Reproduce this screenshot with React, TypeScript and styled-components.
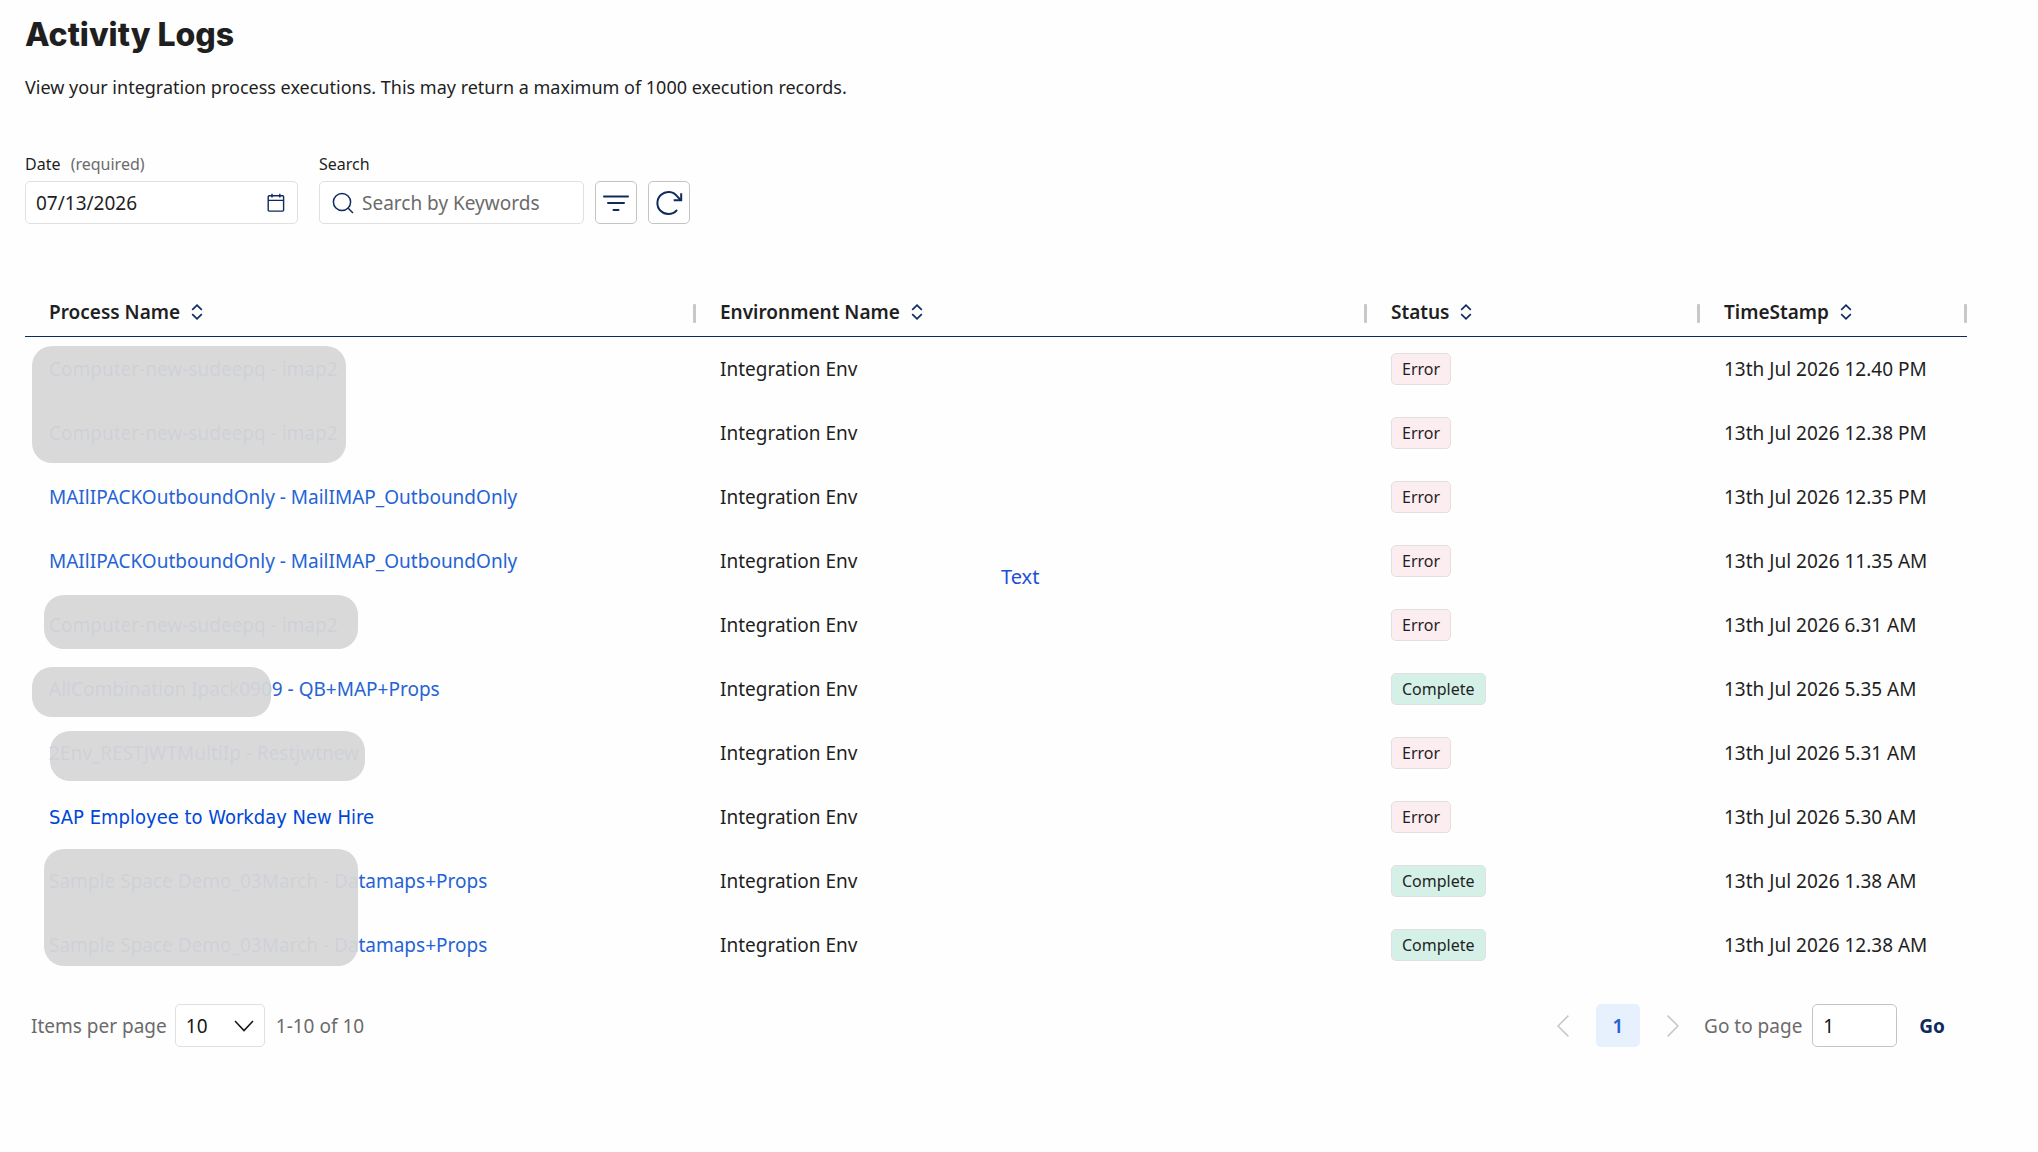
import { useState } from "react";
import styled, { createGlobalStyle } from "styled-components";

const Colors = {
  text: "#1f1f1f",
  muted: "#6b6b6b",
  navy: "#0f2a5c",
  link: "#2563d4",
  border: "#e0e0e0",
  borderStrong: "#c4c4c4",
};

const GlobalStyle = createGlobalStyle`
  * {
    box-sizing: border-box;
  }

  body {
    margin: 0;
    background: #fefefe;
    color: ${Colors.text};
    font-family: "Noto Sans", "Open Sans", sans-serif;
    font-size: 19px;
    line-height: 26px;
  }

  button,
  input,
  select {
    font: inherit;
    color: inherit;
    margin: 0;
  }

  svg {
    display: block;
    flex: none;
  }
`;

const Page = styled.main`
  padding: 16px 71px 0 25px;
`;

const Title = styled.h1`
  margin: 0;
  font-family: Inter, sans-serif;
  font-size: 32px;
  font-weight: 800;
  line-height: 38px;
`;

const Subtitle = styled.p`
  margin: 20px 0 0;
  font-size: 18px;
`;

const Toolbar = styled.div`
  display: flex;
  align-items: flex-end;
  margin-top: 53px;
`;

const Field = styled.div<{ $width: number }>`
  display: flex;
  flex-direction: column;
  gap: 6px;
  width: ${(p) => p.$width}px;
  margin-right: 11px;

  &:first-child {
    margin-right: 21px;
  }
`;

const Label = styled.label`
  font-size: 16px;
  line-height: 22px;

  span {
    margin-left: 6px;
    color: ${Colors.muted};
  }
`;

const InputBox = styled.div`
  display: flex;
  align-items: center;
  gap: 8px;
  height: 43px;
  padding: 0 12px 0 10px;
  border: 1px solid ${Colors.border};
  border-radius: 5px;
  background: white;

  > svg {
    margin-left: 2px;
  }
`;

const TextInput = styled.input`
  flex: 1;
  min-width: 0;
  padding: 0;
  border: none;
  outline: none;
  background: transparent;

  &::placeholder {
    color: ${Colors.muted};
    opacity: 1;
  }
`;

const PlainButton = styled.button`
  display: flex;
  align-items: center;
  justify-content: center;
  padding: 0;
  border: none;
  background: none;
  color: ${Colors.navy};
  cursor: pointer;
`;

const IconButton = styled(PlainButton)`
  width: 42px;
  height: 43px;
  margin-right: 11px;
  border: 1px solid ${Colors.borderStrong};
  border-radius: 5px;
  background: white;
`;

const TableArea = styled.div`
  position: relative;
  margin-top: 64px;
`;

const Table = styled.table`
  width: 100%;
  table-layout: fixed;
  border-collapse: separate;
  border-spacing: 0;
`;

const Col = styled.col<{ $width?: number }>`
  width: ${(p) => (p.$width ? p.$width + "px" : "auto")};
`;

const HeadCell = styled.th`
  height: 49px;
  padding: 0 0 0 24px;
  border-bottom: 1px solid ${Colors.navy};
  text-align: left;
  font-weight: 600;
`;

const HeadContent = styled.div`
  display: flex;
  align-items: center;
  gap: 11px;
`;

const Resizer = styled.span`
  width: 3px;
  height: 19px;
  margin: 2px 0 0 auto;
  border-radius: 1px;
  background: #c8c8c8;
`;

const Cell = styled.td`
  height: 64px;
  padding: 0 0 0 24px;
  white-space: nowrap;
`;

const ProcessLink = styled.a<{ $edited?: boolean }>`
  color: ${(p) => (p.$edited ? "#0047d6" : Colors.link)};
  font-family: ${(p) =>
    p.$edited ? '"DejaVu Sans Condensed", "DejaVu Sans"' : '"Noto Sans"'}, sans-serif;
  font-size: ${(p) => (p.$edited ? 20 : 19)}px;
  text-decoration: none;
`;

const Badge = styled.span<{ $status: string }>`
  display: inline-block;
  height: 32px;
  padding: 0 10px;
  border: 1px solid ${Colors.border};
  border-radius: 5px;
  background: ${(p) => (p.$status === "Error" ? "#fcedf0" : "#d5f1e7")};
  font-size: 16px;
  line-height: 30px;
  vertical-align: middle;
`;

const Mask = styled.div<{ $x: number; $y: number; $w: number; $h: number }>`
  position: absolute;
  left: ${(p) => p.$x}px;
  top: ${(p) => p.$y}px;
  width: ${(p) => p.$w}px;
  height: ${(p) => p.$h}px;
  border-radius: 20px;
  background: rgba(215, 215, 215, 0.95);
`;

const FloatingText = styled.span`
  position: absolute;
  left: 976px;
  top: 276px;
  color: #1d4fd7;
  font-size: 20px;
`;

const Footer = styled.div`
  display: flex;
  align-items: center;
  justify-content: space-between;
  margin-top: 27px;
  padding: 0 22px 0 6px;
  color: ${Colors.muted};
`;

const FooterGroup = styled.div`
  display: flex;
  align-items: center;
`;

const SelectBox = styled.div`
  position: relative;
  width: 90px;
  margin: 0 11px 0 8px;

  svg {
    position: absolute;
    top: 15px;
    right: 11px;
    pointer-events: none;
  }
`;

const Select = styled.select`
  width: 100%;
  height: 43px;
  padding: 0 10px;
  border: 1px solid ${Colors.border};
  border-radius: 5px;
  appearance: none;
  background: white;
  color: #161616;
`;

const PageButton = styled(PlainButton)`
  width: 44px;
  height: 43px;
  margin: 0 27px;
  border-radius: 5px;
  background: #e6f1fd;
  color: ${Colors.link};
  font-weight: 600;
`;

const PageInput = styled.input`
  width: 85px;
  height: 43px;
  margin: 0 22px 0 10px;
  padding: 0 10px;
  border: 1px solid ${Colors.borderStrong};
  border-radius: 5px;
  background: white;
  color: #161616;
`;

const GoLabel = styled.label`
  margin-left: 25px;
`;

const GoButton = styled(PlainButton)`
  font-weight: 700;
`;

const columns = ["Process Name", "Environment Name", "Status", "TimeStamp"];

const rows = [
  { name: "Computer-new-sudeepq - imap2", status: "Error", time: "12.40 PM" },
  { name: "Computer-new-sudeepq - imap2", status: "Error", time: "12.38 PM" },
  { name: "MAIlIPACKOutboundOnly - MailIMAP_OutboundOnly", status: "Error", time: "12.35 PM" },
  { name: "MAIlIPACKOutboundOnly - MailIMAP_OutboundOnly", status: "Error", time: "11.35 AM" },
  { name: "Computer-new-sudeepq - imap2", status: "Error", time: "6.31 AM" },
  { name: "AllCombination Ipack0909 - QB+MAP+Props", status: "Complete", time: "5.35 AM" },
  { name: "2Env_RESTJWTMultiIp - Restjwtnew", status: "Error", time: "5.31 AM" },
  { name: "SAP Employee to Workday New Hire", status: "Error", time: "5.30 AM", edited: true },
  { name: "Sample Space Demo_03March - Datamaps+Props", status: "Complete", time: "1.38 AM" },
  { name: "Sample Space Demo_03March - Datamaps+Props", status: "Complete", time: "12.38 AM" },
];

// areas that hide process names, relative to the table
const masks = [
  { x: 7, y: 58, w: 314, h: 117 },
  { x: 19, y: 307, w: 314, h: 54 },
  { x: 7, y: 379, w: 239, h: 50 },
  { x: 25, y: 443, w: 315, h: 50 },
  { x: 19, y: 561, w: 314, h: 117 },
];

const CalendarIcon = () => (
  <svg width='18' height='20' viewBox='0 0 18 20' fill='none' stroke='currentColor' strokeWidth='1.4'>
    <rect x='1.2' y='2.7' width='15.4' height='15.4' rx='1' />
    <path d='M1.2 7.4h15.4M5 .8v3.6M12.8 .8v3.6' />
  </svg>
);

const SearchIcon = () => (
  <svg width='22' height='22' viewBox='0 0 22 22' fill='none' stroke={Colors.navy} strokeWidth='1.5'>
    <circle cx='10' cy='10' r='8.6' />
    <path d='M16 16l5 5' />
  </svg>
);

const FilterIcon = () => (
  <svg width='28' height='20' viewBox='0 0 28 20' fill='none' stroke='currentColor' strokeWidth='2' strokeLinecap='round'>
    <path d='M2 3.5h24M6 10h16M11.5 17h5' />
  </svg>
);

const RefreshIcon = () => (
  <svg width='28' height='26' viewBox='0 0 28 26' fill='none' stroke='currentColor' strokeWidth='2'>
    <path d='M21.5 20.5A11 11 0 1 1 22 6.2L25.5 10' strokeLinecap='round' />
    <path d='M26.2 3.2v7h-7.5' />
  </svg>
);

const SortIcon = () => (
  <svg width='12' height='16' viewBox='0 0 12 16' fill='none' stroke='currentColor' strokeWidth='1.7'>
    <path d='M1.2 5.8L6 1.2l4.8 4.6M1.2 10.2L6 14.8l4.8-4.6' />
  </svg>
);

const ChevronDown = () => (
  <svg width='20' height='14' viewBox='0 0 20 14' fill='none' stroke='#161616' strokeWidth='1.6'>
    <path d='M1 2l9 9.5L19 2' />
  </svg>
);

const ChevronSide = ({ next }: { next?: boolean }) => (
  <svg width='12' height='22' viewBox='0 0 12 22' fill='none' stroke='#c6c6c6' strokeWidth='1.5'>
    <path d={next ? "M.6 .6L11 11 .6 21.4" : "M11.4 .6L1 11l10.4 10.4"} />
  </svg>
);

const App = () => {
  const [date, setDate] = useState("07/13/2026");
  const [keyword, setKeyword] = useState("");
  const [pageSize, setPageSize] = useState("10");
  const [page, setPage] = useState("1");

  return (
    <>
      <GlobalStyle />
      <Page>
        <Title>Activity Logs</Title>
        <Subtitle>
          View your integration process executions. This may return a maximum of
          1000 execution records.
        </Subtitle>

        <Toolbar>
          <Field $width={273}>
            <Label htmlFor='date'>
              Date <span>(required)</span>
            </Label>
            <InputBox>
              <TextInput
                id='date'
                value={date}
                onChange={(e) => setDate(e.target.value)}
              />
              <PlainButton aria-label='Open calendar'>
                <CalendarIcon />
              </PlainButton>
            </InputBox>
          </Field>
          <Field $width={265}>
            <Label htmlFor='search'>Search</Label>
            <InputBox>
              <SearchIcon />
              <TextInput
                id='search'
                placeholder='Search by Keywords'
                value={keyword}
                onChange={(e) => setKeyword(e.target.value)}
              />
            </InputBox>
          </Field>
          <IconButton aria-label='Filter'>
            <FilterIcon />
          </IconButton>
          <IconButton aria-label='Refresh'>
            <RefreshIcon />
          </IconButton>
        </Toolbar>

        <TableArea>
          <Table>
            <colgroup>
              <Col />
              <Col />
              <Col $width={333} />
              <Col $width={267} />
            </colgroup>
            <thead>
              <tr>
                {columns.map((item) => (
                  <HeadCell key={item}>
                    <HeadContent>
                      {item}
                      <PlainButton aria-label={"Sort by " + item}>
                        <SortIcon />
                      </PlainButton>
                      <Resizer />
                    </HeadContent>
                  </HeadCell>
                ))}
              </tr>
            </thead>
            <tbody>
              {rows.map((item, index) => (
                <tr key={item.name + index}>
                  <Cell>
                    <ProcessLink href='#' $edited={item.edited}>
                      {item.name}
                    </ProcessLink>
                  </Cell>
                  <Cell>Integration Env</Cell>
                  <Cell>
                    <Badge $status={item.status}>{item.status}</Badge>
                  </Cell>
                  <Cell>13th Jul 2026 {item.time}</Cell>
                </tr>
              ))}
            </tbody>
          </Table>
          {masks.map((item) => (
            <Mask key={item.y} $x={item.x} $y={item.y} $w={item.w} $h={item.h} />
          ))}
          <FloatingText>Text</FloatingText>
        </TableArea>

        <Footer>
          <FooterGroup>
            <label htmlFor='page-size'>Items per page</label>
            <SelectBox>
              <Select
                id='page-size'
                value={pageSize}
                onChange={(e) => setPageSize(e.target.value)}
              >
                <option>10</option>
                <option>25</option>
                <option>50</option>
              </Select>
              <ChevronDown />
            </SelectBox>
            <span>1-10 of 10</span>
          </FooterGroup>
          <FooterGroup>
            <PlainButton aria-label='Previous page' disabled>
              <ChevronSide />
            </PlainButton>
            <PageButton aria-current='page'>1</PageButton>
            <PlainButton aria-label='Next page' disabled>
              <ChevronSide next />
            </PlainButton>
            <GoLabel htmlFor='go-page'>Go to page</GoLabel>
            <PageInput
              id='go-page'
              value={page}
              onChange={(e) => setPage(e.target.value)}
            />
            <GoButton>Go</GoButton>
          </FooterGroup>
        </Footer>
      </Page>
    </>
  );
};

export default App;
